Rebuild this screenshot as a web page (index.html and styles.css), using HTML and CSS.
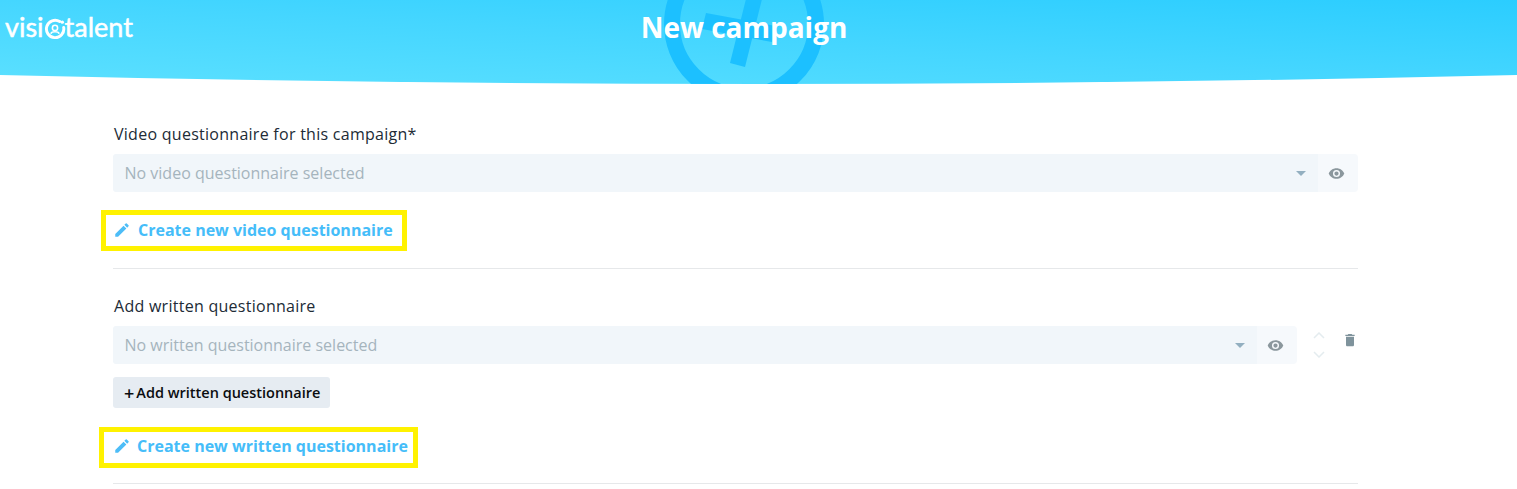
FILE: index.html
```html
<!DOCTYPE html>
<html lang="en">
<head>
<meta charset="utf-8">
<title>New campaign</title>
<link rel="stylesheet" href="styles.css">
</head>
<body>
<header class="hero">
  <svg class="hero-mark" width="180" height="84" viewBox="0 0 180 84" aria-hidden="true">
    <circle cx="90" cy="24" r="72" fill="none" stroke="#1cc0ff" stroke-width="16"/>
    <path d="M76 63 91 67 109 -5 94 -9Z" fill="#1cc0ff"/>
    <path d="M52 13 48 29 118 42 122 26Z" fill="#1cc0ff"/>
  </svg>
  <div class="logo">
    <span>visi</span><svg class="logo-icon" width="22" height="22" viewBox="0 0 21 21" aria-hidden="true"><path d="M15 3.400A8.300 8.300 0 1 0 18.800 9" fill="none" stroke="#fff" stroke-width="2.800" stroke-linecap="round"/><circle cx="17.500" cy="4" r="1.600" fill="#fff"/><circle cx="10.500" cy="9.500" r="2.500" fill="none" stroke="#fff" stroke-width="1.500"/><path d="M6.500 15c1-2.400 7-2.400 8 0" fill="none" stroke="#fff" stroke-width="1.500"/></svg><span>talent</span>
  </div>
  <h1 class="hero-title">New campaign</h1>
</header>
<main class="form">
  <section class="group group-first">
    <label class="field-label">Video questionnaire for this campaign*</label>
    <div class="field-row">
      <div class="select">
        <span class="select-text">No video questionnaire selected</span>
        <span class="caret"></span>
      </div>
      <div class="addon">
        <svg width="17" height="17" viewBox="0 0 24 24" aria-hidden="true"><path fill="#8b979d" d="M12 4.500C7 4.500 2.700 7.600 1 12c1.700 4.400 6 7.500 11 7.500s9.300-3.100 11-7.500c-1.700-4.400-6-7.500-11-7.500zM12 17a5 5 0 1 1 0-10 5 5 0 0 1 0 10zm0-8a3 3 0 1 0 0 6 3 3 0 0 0 0-6z"/></svg>
      </div>
    </div>
    <a class="create-link create-video">
      <svg width="18" height="18" viewBox="0 0 24 24" aria-hidden="true"><path fill="#4dbdf7" d="M3 17.250V21h3.750L17.810 9.940l-3.750-3.750L3 17.250zM20.710 7.040a1 1 0 0 0 0-1.410l-2.340-2.340a1 1 0 0 0-1.410 0l-1.830 1.830 3.750 3.750 1.830-1.830z"/></svg>
      <span>Create new video questionnaire</span>
    </a>
  </section>
  <section class="group group-second">
    <label class="field-label">Add written questionnaire</label>
    <div class="field-line">
      <div class="field-row field-row-short">
        <div class="select">
          <span class="select-text">No written questionnaire selected</span>
          <span class="caret"></span>
        </div>
        <div class="addon">
          <svg width="17" height="17" viewBox="0 0 24 24" aria-hidden="true"><path fill="#8b979d" d="M12 4.500C7 4.500 2.700 7.600 1 12c1.700 4.400 6 7.500 11 7.500s9.300-3.100 11-7.500c-1.700-4.400-6-7.500-11-7.500zM12 17a5 5 0 1 1 0-10 5 5 0 0 1 0 10zm0-8a3 3 0 1 0 0 6 3 3 0 0 0 0-6z"/></svg>
        </div>
      </div>
      <div class="order">
        <svg width="12" height="7" viewBox="0 0 12 7" aria-hidden="true"><path d="M1 6 6 1l5 5" fill="none" stroke="#e4ecef" stroke-width="1.500"/></svg>
        <svg width="12" height="7" viewBox="0 0 12 7" aria-hidden="true"><path d="M1 1l5 5 5-5" fill="none" stroke="#e4ecef" stroke-width="1.500"/></svg>
      </div>
      <svg class="trash" width="16" height="16" viewBox="0 0 24 24" aria-hidden="true"><path fill="#7f939c" d="M6 19.500c0 1.100.9 2 2 2h8c1.100 0 2-.9 2-2V7H6v12.500zM19 4h-3.500l-1-1h-5l-1 1H5v2h14V4z"/></svg>
    </div>
    <button class="add-btn" type="button"><span class="plus">+</span>Add written questionnaire</button>
    <a class="create-link create-written">
      <svg width="18" height="18" viewBox="0 0 24 24" aria-hidden="true"><path fill="#4dbdf7" d="M3 17.250V21h3.750L17.810 9.940l-3.750-3.750L3 17.250zM20.710 7.040a1 1 0 0 0 0-1.410l-2.340-2.340a1 1 0 0 0-1.410 0l-1.830 1.830 3.750 3.750 1.830-1.830z"/></svg>
      <span>Create new written questionnaire</span>
    </a>
  </section>
</main>
</body>
</html>
```
FILE: styles.css
```css
* { box-sizing: border-box; }
html, body { margin: 0; padding: 0; }
body {
  background: #fff;
  font-family: "Open Sans", "Liberation Sans", sans-serif;
  color: #212b36;
  overflow: hidden;
}
.hero {
  position: relative;
  height: 84px;
  padding-right: 29px;
  background: linear-gradient(to top right, #5be0ff 0%, #45d6ff 50%, #2bcdff 100%);
  clip-path: path("M0 0H1517V75Q758 93 0 75Z");
  display: flex;
  justify-content: center;
  overflow: hidden;
}
.hero-mark {
  position: absolute;
  left: 654px;
  top: 0;
}
.hero-title {
  position: relative;
  margin: 8px 0 0;
  font-size: 28px;
  line-height: 38px;
  font-weight: 700;
  color: #fff;
}
.logo {
  position: absolute;
  left: 5px;
  top: 10px;
  display: flex;
  align-items: center;
  font-family: Lato, sans-serif;
  font-size: 27px;
  line-height: 34px;
  color: #fff;
  -webkit-text-stroke: 0.5px #fff;
}
.logo-icon { margin: 3px -1px 0 0; }
.form {
  width: 1245px;
  margin-left: 113px;
}
.group {
  display: flex;
  flex-direction: column;
  align-items: flex-start;
  padding-top: 27px;
  padding-bottom: 15px;
  border-bottom: 1px solid #e6e8ea;
}
.group-first { padding-top: 40px; padding-bottom: 17px; }
.field-label {
  font-size: 16px;
  letter-spacing: 0.27px;
  line-height: 20px;
  font-weight: 500;
  margin-bottom: 10px;
  padding-left: 1px;
  color: #212b36;
}
.field-row {
  display: flex;
  width: 1245px;
  height: 38px;
}
.field-line {
  display: flex;
  width: 1245px;
}
.field-row-short { width: 1184px; }
.select {
  flex: 1;
  display: flex;
  align-items: center;
  justify-content: space-between;
  padding: 0 12px 0 11.500px;
  background: #f1f6fa;
  border-radius: 3px 0 0 3px;
}
.select-text {
  font-size: 16px;
  color: #a5b4bd;
}
.caret {
  width: 0;
  height: 0;
  border-left: 5.500px solid transparent;
  border-right: 5.500px solid transparent;
  border-top: 5.500px solid #93afc0;
}
.addon {
  width: 40px;
  display: flex;
  align-items: center;
  justify-content: center;
  padding-right: 3px;
  background: #f6f9fc;
  border-radius: 0 4px 4px 0;
}
.create-link {
  display: flex;
  align-items: center;
  border: 5px solid #fff200;
  height: 41px;
  padding-bottom: 2px;
  font-size: 16px;
  font-weight: 700;
  color: #45bdf9;
  cursor: pointer;
}
.create-video {
  margin: 18px 0 0 -12px;
  width: 306px;
  padding-left: 7px;
  gap: 7px;
}
.create-written {
  margin: 19px 0 0 -14px;
  width: 319px;
  padding-left: 9px;
  padding-bottom: 4px;
  gap: 6px;
}
.order {
  width: 44px;
  padding-top: 6px;
  padding-left: 16px;
  display: flex;
  flex-direction: column;
  gap: 12px;
}
.order svg { display: block; }
.trash { margin: 6px 0 0 1px; }
.add-btn {
  margin-top: 13px;
  height: 31px;
  width: 217px;
  padding: 0 0 0 11px;
  display: flex;
  align-items: center;
  border: 0;
  border-radius: 3px;
  background: #e6ecf2;
  font-family: inherit;
  font-size: 14.500px;
  font-weight: 600;
  color: #0b0d10;
}
.plus {
  font-size: 18px;
  line-height: 18px;
  margin-right: 2px;
}
```
